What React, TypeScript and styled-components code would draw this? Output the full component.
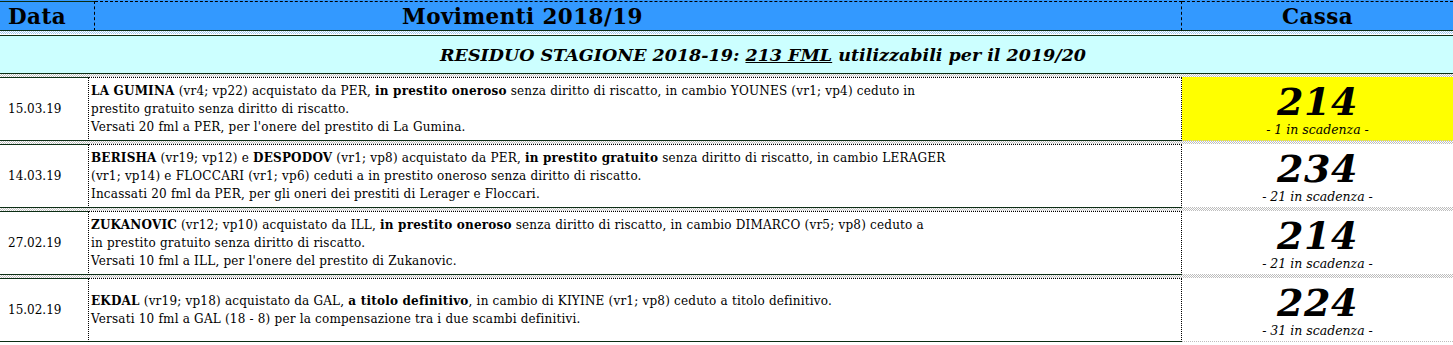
import React from 'react';
import styled, { createGlobalStyle } from 'styled-components';

const GlobalStyle = createGlobalStyle`
  html, body {
    margin: 0;
    padding: 0;
    background: #ffffff;
  }
  body {
    font-family: "DejaVu Serif", "Liberation Serif", serif;
    color: #000;
  }
`;

const Sheet = styled.div`
  width: 1453px;
  display: flex;
  flex-direction: column;
`;

const HeaderRow = styled.div`
  display: grid;
  grid-template-columns: 95px 1087px 1fr;
  height: 31px;
  background: #3399ff;
`;

const HeaderCell = styled.div<{ $pad?: number; $align?: string; $first?: boolean; $last?: boolean }>`
  display: flex;
  align-items: center;
  justify-content: ${(p) => p.$align || 'flex-start'};
  padding-left: ${(p) => p.$pad || 0}px;
  border-top: 1px ${(p) => (p.$first ? 'solid #0b2d14' : 'dashed #000')};
  border-bottom: 1px solid #0b2d14;
  border-right: ${(p) => (p.$last ? 'none' : '1px dashed #000')};
  margin-top: 1px;
  font-weight: bold;
  font-size: 21.5px;
  letter-spacing: 0.4px;
  box-sizing: border-box;
`;

const Checker = styled.div<{ $color?: string }>`
  height: 3px;
  background-image: linear-gradient(45deg, ${(p) => p.$color || '#bdbdbd'} 25%, transparent 25%, transparent 75%, ${(p) => p.$color || '#bdbdbd'} 75%),
    linear-gradient(45deg, ${(p) => p.$color || '#bdbdbd'} 25%, transparent 25%, transparent 75%, ${(p) => p.$color || '#bdbdbd'} 75%);
  background-size: 2px 2px;
  background-position: 0 0, 1px 1px;
  background-color: #fff;
`;

const Banner = styled.div`
  height: 39px;
  background: #ccffff;
  border-top: 1px solid #0b2d14;
  border-bottom: 1px solid #0b2d14;
  display: flex;
  align-items: center;
  padding-left: 440px;
  font-size: 17.5px;
  font-weight: bold;
  font-style: italic;
  box-sizing: border-box;
  margin-top: 1px;
`;

const Underlined = styled.span`
  text-decoration: underline;
`;

const Row = styled.div`
  display: grid;
  grid-template-columns: 89px 1093px 1fr;
  height: 64px;
`;

const DateCell = styled.div`
  display: flex;
  align-items: center;
  padding-left: 8px;
  font-size: 12px;
  border-top: 1px solid #0b2d14;
  border-bottom: 1px solid #0b2d14;
  border-right: 1px dotted #000;
  box-sizing: border-box;
`;

const TextCell = styled.div`
  display: flex;
  align-items: center;
  padding-left: 2px;
  font-size: 12px;
  letter-spacing: 0.2px;
  line-height: 18px;
  white-space: nowrap;
  border-top: 1px dotted #000;
  border-bottom: 1px solid #0b2d14;
  border-right: 1px dotted #000;
  box-sizing: border-box;
`;

const CashCell = styled.div<{ $highlight?: boolean }>`
  display: flex;
  flex-direction: column;
  align-items: center;
  justify-content: center;
  background: ${(p) => (p.$highlight ? '#ffff00' : '#fff')};
  border-bottom: 1px dotted #bdbdbd;
  font-style: italic;
  box-sizing: border-box;
`;

const Amount = styled.div`
  font-size: 38px;
  font-weight: bold;
  line-height: 40px;
  letter-spacing: 0.5px;
  margin-top: 1px;
`;

const Expiring = styled.div`
  font-size: 12.5px;
  line-height: 15px;
`;

type Move = {
  date: string;
  lines: React.ReactNode[];
  cash: number;
  expiring: number;
  highlight?: boolean;
};

const moves: Move[] = [
  {
    date: '15.03.19',
    lines: [
      <>
        <b>LA GUMINA</b> (vr4; vp22) acquistato da PER, <b>in prestito oneroso</b> senza diritto di riscatto, in cambio YOUNES (vr1; vp4) ceduto in
      </>,
      <>prestito gratuito senza diritto di riscatto.</>,
      <>Versati 20 fml a PER, per l'onere del prestito di La Gumina.</>,
    ],
    cash: 214,
    expiring: 1,
    highlight: true,
  },
  {
    date: '14.03.19',
    lines: [
      <>
        <b>BERISHA</b> (vr19; vp12) e <b>DESPODOV</b> (vr1; vp8) acquistato da PER, <b>in prestito gratuito</b> senza diritto di riscatto, in cambio LERAGER
      </>,
      <>(vr1; vp14) e FLOCCARI (vr1; vp6) ceduti a in prestito oneroso senza diritto di riscatto.</>,
      <>Incassati 20 fml da PER, per gli oneri dei prestiti di Lerager e Floccari.</>,
    ],
    cash: 234,
    expiring: 21,
  },
  {
    date: '27.02.19',
    lines: [
      <>
        <b>ZUKANOVIC</b> (vr12; vp10) acquistato da ILL, <b>in prestito oneroso</b> senza diritto di riscatto, in cambio DIMARCO (vr5; vp8) ceduto a
      </>,
      <>in prestito gratuito senza diritto di riscatto.</>,
      <>Versati 10 fml a ILL, per l'onere del prestito di Zukanovic.</>,
    ],
    cash: 214,
    expiring: 21,
  },
  {
    date: '15.02.19',
    lines: [
      <>
        <b>EKDAL</b> (vr19; vp18) acquistato da GAL, <b>a titolo definitivo</b>, in cambio di KIYINE (vr1; vp8) ceduto a titolo definitivo.
      </>,
      <>Versati 10 fml a GAL (18 - 8) per la compensazione tra i due scambi definitivi.</>,
    ],
    cash: 224,
    expiring: 31,
  },
];

export default function App() {
  return (
    <>
      <GlobalStyle />
      <Sheet>
        <HeaderRow>
          <HeaderCell $first $pad={8}>Data</HeaderCell>
          <HeaderCell $pad={307}>Movimenti 2018/19</HeaderCell>
          <HeaderCell $last $align="center">Cassa</HeaderCell>
        </HeaderRow>
        <Checker $color="#9fc9f0" />
        <Banner>
          RESIDUO STAGIONE 2018-19:&nbsp;<Underlined>213 FML</Underlined>&nbsp;utilizzabili per il 2019/20
        </Banner>
        {moves.map((m) => (
          <React.Fragment key={m.date}>
            <Checker />
            <Row>
              <DateCell>{m.date}</DateCell>
              <TextCell>
                <div>
                  {m.lines.map((l, i) => (
                    <div key={i}>{l}</div>
                  ))}
                </div>
              </TextCell>
              <CashCell $highlight={m.highlight}>
                <Amount>{m.cash}</Amount>
                <Expiring>- {m.expiring} in scadenza -</Expiring>
              </CashCell>
            </Row>
          </React.Fragment>
        ))}
      </Sheet>
    </>
  );
}
